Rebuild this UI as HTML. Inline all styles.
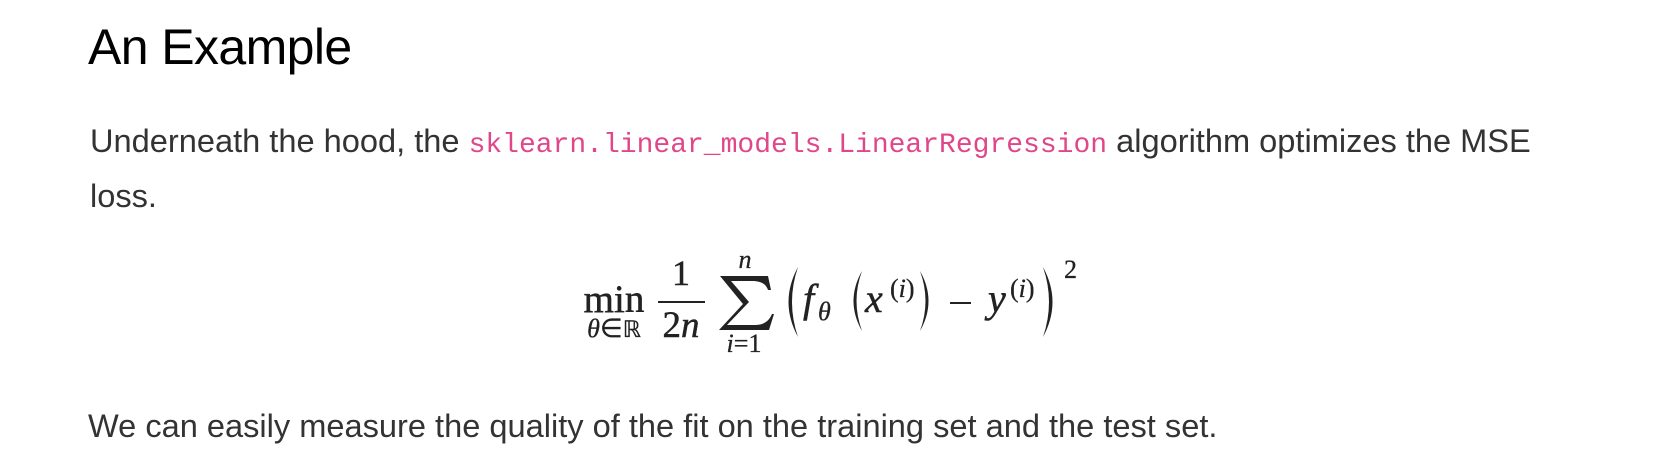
<!DOCTYPE html>
<html><head><meta charset="utf-8"><style>
html,body{margin:0;padding:0;background:#fff;width:1660px;height:458px;overflow:hidden;position:relative}
.t{position:absolute;font-family:"Liberation Sans",sans-serif;color:#333;white-space:nowrap}
h1{position:absolute;margin:0;left:88px;top:22px;font:400 50px/1 "Liberation Sans",sans-serif;color:#000;letter-spacing:-0.6px}
code{font-family:"Liberation Mono","DejaVu Sans Mono",monospace;color:#e0478a;font-size:28px}
svg{position:absolute;left:0;top:0}
</style></head><body>
<h1>An Example</h1>
<div class="t" style="left:90px;top:116px;font-size:32.6px;line-height:50px">Underneath the hood, the <code>sklearn.linear_models.LinearRegression</code> algorithm optimizes the MSE<br>loss.</div>
<div class="t" style="left:88px;top:408px;font-size:32.6px;line-height:36px">We can easily measure the quality of the fit on the training set and the test set.</div>
<svg width="1660" height="458" xmlns="http://www.w3.org/2000/svg" font-family="Liberation Serif, serif" fill="#222" stroke="#222" stroke-width="0.5">
<text x="614" y="312" font-size="39" text-anchor="middle">min</text>
<text x="614" y="337" font-size="26" text-anchor="middle" stroke-width="0.3"><tspan font-style="italic">θ</tspan>∈<tspan font-family="DejaVu Sans, sans-serif" font-size="23">ℝ</tspan></text>
<text x="681" y="285" font-size="36" text-anchor="middle">1</text>
<rect x="658" y="301" width="47" height="2" stroke="none"/>
<text x="681" y="337" font-size="37" text-anchor="middle">2<tspan font-style="italic">n</tspan></text>
<path stroke="none" d="M720 276 L768 276 L771 290 L768 290 C766 284 761 281 752 281 L731 281 L749 302 L727 325 L755 325 C764 325 769 321 772 314 L774 314 L769 330 L719 330 L743 304 Z"/>
<text x="745" y="268" font-size="26" font-style="italic" text-anchor="middle" stroke-width="0.3">n</text>
<text x="744" y="352" font-size="26" text-anchor="middle" stroke-width="0.3"><tspan font-style="italic">i</tspan>=1</text>
<path stroke="none" d="M798 267 Q779 302 798 337 Q786 302 798 267 Z"/>
<text x="803" y="312" font-size="40" font-style="italic">f</text>
<text x="818" y="320" font-size="26" font-style="italic" stroke-width="0.3">θ</text>
<path stroke="none" d="M862 271 Q845 301 862 331 Q851 301 862 271 Z"/>
<text x="865" y="312" font-size="40" font-style="italic">x</text>
<text x="890" y="297" font-size="26" stroke-width="0.3">(<tspan font-style="italic">i</tspan>)</text>
<path stroke="none" d="M920 271 Q937 301 920 331 Q931 301 920 271 Z"/>
<rect x="950" y="302" width="21" height="2" stroke="none"/>
<text x="988" y="312" font-size="40" font-style="italic">y</text>
<text x="1010" y="297" font-size="26" stroke-width="0.3">(<tspan font-style="italic">i</tspan>)</text>
<path stroke="none" d="M1043 267 Q1062 302 1043 337 Q1055 302 1043 267 Z"/>
<text x="1064" y="278" font-size="26" stroke-width="0.3">2</text>
</svg>
</body></html>
